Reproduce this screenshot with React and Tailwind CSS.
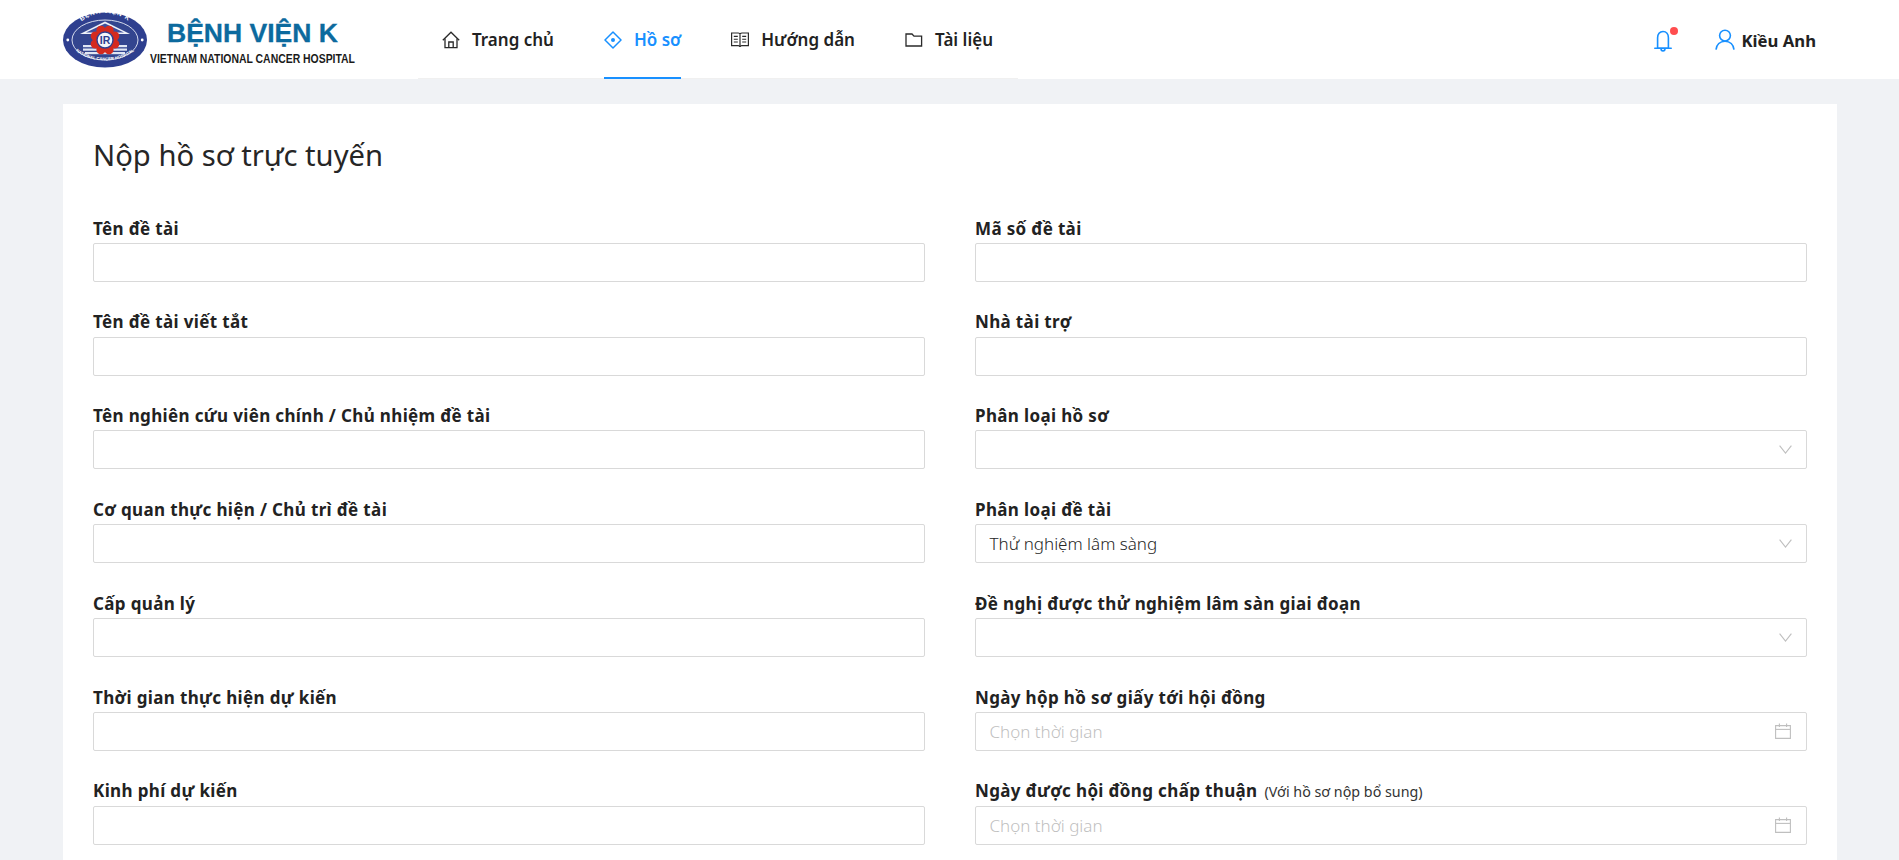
import React from "react";

function Logo() {
  const petals = [];
  for (let i = 0; i < 8; i++) {
    const a = (i * Math.PI) / 4 + Math.PI / 8;
    petals.push(<circle key={i} cx={42 + 10.5 * Math.cos(a)} cy={33 + 10.5 * Math.sin(a)} r="4.6" fill="#d42a1e" />);
  }
  return (
    <svg width="345" height="74" viewBox="0 0 345 74" className="shrink-0 block">
      <ellipse cx="42" cy="33" rx="42" ry="27.5" fill="#2e3f8f" />
      <ellipse cx="42" cy="33" rx="33" ry="20" fill="#33458f" stroke="#e8ecf6" strokeWidth="0.9" />
      <path d="M17 27 L42 14.5 L67 27 Z" fill="#eef1f8" />
      <path d="M23 25.5 L42 16.5 L61 25.5 Z" fill="#3d4f9c" />
      <rect x="20" y="38" width="44" height="2.2" fill="#dfe5f3" />
      <rect x="20" y="41.5" width="44" height="2.2" fill="#dfe5f3" />
      <rect x="22" y="45" width="40" height="2.2" fill="#dfe5f3" />
      {petals}
      <circle cx="42" cy="33" r="10" fill="#d42a1e" />
      <circle cx="42" cy="33" r="8" fill="#f4f6fb" stroke="#2e3f8f" strokeWidth="1.4" />
      <text x="42" y="37" textAnchor="middle" fontSize="10.5" fontWeight="700" fontFamily="'Liberation Sans', sans-serif" fill="#2e3f8f">IR</text>
      <path id="logoTop" d="M11 30 A 31 24 0 0 1 73 30" fill="none" />
      <text fontSize="6.5" fontWeight="700" fill="#fff" fontFamily="'Liberation Sans', sans-serif" letterSpacing="0.8">
        <textPath href="#logoTop" startOffset="50%" textAnchor="middle">BỆNH VIỆN K</textPath>
      </text>
      <path id="logoBot" d="M8 37 A 35 21.5 0 0 0 76 37" fill="none" />
      <text fontSize="4.2" fontWeight="700" fill="#fff" fontFamily="'Liberation Sans', sans-serif">
        <textPath href="#logoBot" startOffset="50%" textAnchor="middle">NATIONAL CANCER HOSPITAL</textPath>
      </text>
      <circle cx="4.8" cy="33" r="1.4" fill="#fff" />
      <circle cx="79.2" cy="33" r="1.4" fill="#fff" />
      <text x="104" y="35" fontSize="26" fontWeight="700" fontFamily="'Liberation Sans', sans-serif" fill="#0c6a9e" stroke="#0c6a9e" strokeWidth="0.3" textLength="171" lengthAdjust="spacingAndGlyphs">BỆNH VIỆN K</text>
      <text x="87" y="55.5" fontSize="12.5" fontWeight="700" fontFamily="'Liberation Sans', sans-serif" fill="#1a1a1a" textLength="205" lengthAdjust="spacingAndGlyphs">VIETNAM NATIONAL CANCER HOSPITAL</text>
    </svg>
  );
}

function HomeIcon() {
  return (
    <svg width="18" height="18" viewBox="0 0 18 18" fill="none" stroke="#2a2a2a" strokeWidth="1.3" className="shrink-0">
      <path d="M0.8 9.2 L9 1.2 L17.2 9.2" />
      <path d="M3 7.5 V16.6 H15 V7.5" />
      <path d="M6.8 16.6 V11 H11.2 V16.6" />
    </svg>
  );
}
function DiamondIcon() {
  return (
    <svg width="18" height="18" viewBox="0 0 18 18" fill="none" className="shrink-0">
      <path d="M9 1 L17 9 L9 17 L1 9 Z" stroke="#1890ff" strokeWidth="1.5" strokeLinejoin="round" />
      <circle cx="9" cy="9" r="2" fill="#1890ff" />
    </svg>
  );
}
function BookIcon() {
  return (
    <svg width="18" height="16" viewBox="0 0 18 16" fill="none" stroke="#2a2a2a" strokeWidth="1.2" className="shrink-0">
      <path d="M0.6 1 H7.2 C8.2 1 9 1.7 9 2.6 C9 1.7 9.8 1 10.8 1 H17.4 V13.6 H10.8 C9.9 13.6 9.2 14 9 15 C8.8 14 8.1 13.6 7.2 13.6 H0.6 Z" />
      <path d="M9 2.6 V14.6" />
      <path d="M2.8 4.4 H6.8 M2.8 7.2 H6.8 M2.8 10 H6.8 M11.2 4.4 H15.2 M11.2 7.2 H15.2 M11.2 10 H15.2" strokeWidth="1.1" />
    </svg>
  );
}
function FolderIcon() {
  return (
    <svg width="18" height="14" viewBox="0 0 18 14" fill="none" stroke="#2a2a2a" strokeWidth="1.3" className="shrink-0">
      <path d="M1 1 H7 L9 3.2 H16.6 V13 H1 Z" />
    </svg>
  );
}
function BellIcon() {
  return (
    <svg width="18" height="23" viewBox="0 0 18 23" fill="none" stroke="#1890ff" strokeWidth="1.6" className="block">
      <path d="M9 1.5 C5.6 1.5 3.6 4.2 3.6 7.8 V18.2 H14.4 V7.8 C14.4 4.2 12.4 1.5 9 1.5 Z" />
      <path d="M0.8 18.2 H17.2" strokeLinecap="round" />
      <path d="M7 18.5 A 2 2.4 0 0 0 11 18.5" />
    </svg>
  );
}
function UserIcon() {
  return (
    <svg width="20" height="21" viewBox="0 0 20 21" fill="none" stroke="#1890ff" strokeWidth="1.6" className="shrink-0">
      <circle cx="10" cy="6.6" r="5.4" />
      <path d="M1 20.6 C1.4 15.6 5 12.2 10 12.2 C15 12.2 18.6 15.6 19 20.6" />
    </svg>
  );
}
function Chevron() {
  return (
    <svg width="13" height="9" viewBox="0 0 13 9" fill="none" stroke="#bfbfbf" strokeWidth="1.1" className="shrink-0 -mr-[1px]">
      <path d="M0.6 0.6 L6.5 8 L12.4 0.6" />
    </svg>
  );
}
function Calendar() {
  return (
    <svg width="16" height="16" viewBox="0 0 16 16" fill="none" stroke="#bfbfbf" strokeWidth="1.1" className="shrink-0">
      <path d="M0.6 2.6 H15.4 V15.4 H0.6 Z" />
      <path d="M0.6 6.4 H15.4" />
      <path d="M4.4 0.5 V4 M11.6 0.5 V4" />
    </svg>
  );
}

function Box({ children, right }) {
  return (
    <div className="h-[39.14px] border border-[#d9d9d9] rounded-[2px] bg-white pl-[13.5px] pr-[15px] flex items-center justify-between text-[17px] leading-[25px] font-light">
      <span>{children}</span>
      {right}
    </div>
  );
}

function Field({ label, note, children, right }) {
  return (
    <div className="mb-[24px]">
      <div className="h-[30.69px] pt-[2.5px] flex items-center whitespace-nowrap">
        <span className="text-[17px] font-bold tracking-[0.35px] leading-[22px] text-[#222]">{label}</span>
        {note && <span className="text-[14.3px] leading-[22px] ml-[7px] mt-[1px] text-[#333]">{note}</span>}
      </div>
      <Box right={right}>{children}</Box>
    </div>
  );
}

const Placeholder = () => <span className="text-[#bfbfbf]">Chọn thời gian</span>;

const nav = [
  { label: "Trang chủ", icon: <HomeIcon /> },
  { label: "Hồ sơ", icon: <DiamondIcon />, active: true },
  { label: "Hướng dẫn", icon: <BookIcon /> },
  { label: "Tài liệu", icon: <FolderIcon /> },
];

export default function App() {
  return (
    <div className="h-[860px] overflow-hidden bg-[#f0f2f5] text-[#262626] font-['Noto_Sans','Open_Sans',sans-serif]">
      <header className="h-[79px] bg-white flex items-start">
        <div className="pl-[63px] pt-[6.5px] w-[418px] shrink-0">
          <Logo />
        </div>
        <nav className="h-[79px] border-b border-[#f0f0f0] flex gap-[50px] pl-[24px] w-[600px]">
          {nav.map((n) => (
            <div
              key={n.label}
              className={`h-[79px] flex items-center gap-[12px] pt-[1px] text-[17px] font-semibold ${
                n.active ? "text-[#1890ff] shadow-[inset_0_-2px_0_#1890ff]" : "text-[#222]"
              }`}
            >
              {n.icon}
              <span>{n.label}</span>
            </div>
          ))}
        </nav>
        <div className="ml-auto h-[79px] flex items-center pr-[83px]">
          <div className="relative mr-[43px] mt-[4px]">
            <BellIcon />
            <span className="absolute -top-[3px] -right-[6px] w-[8px] h-[8px] rounded-full bg-[#ff4d4f]" />
          </div>
          <div className="flex items-center gap-[7px] text-[16.7px] font-bold text-[#222]">
            <UserIcon />
            <span className="mt-[3px]">Kiều Anh</span>
          </div>
        </div>
      </header>

      <main className="pl-[63px] pr-[62px] pt-[25px]">
        <div className="bg-white px-[30px] pt-[28px] pb-[30px]">
          <h1 className="text-[29.2px] leading-[47px] font-normal text-[#262626] mb-[33px]">Nộp hồ sơ trực tuyến</h1>
          <div className="grid grid-cols-2 gap-x-[50px]">
            <div>
              <Field label="Tên đề tài" />
              <Field label="Tên đề tài viết tắt" />
              <Field label="Tên nghiên cứu viên chính / Chủ nhiệm đề tài" />
              <Field label="Cơ quan thực hiện / Chủ trì đề tài" />
              <Field label="Cấp quản lý" />
              <Field label="Thời gian thực hiện dự kiến" />
              <Field label="Kinh phí dự kiến" />
            </div>
            <div>
              <Field label="Mã số đề tài" />
              <Field label="Nhà tài trợ" />
              <Field label="Phân loại hồ sơ" right={<Chevron />} />
              <Field label="Phân loại đề tài" right={<Chevron />}>Thử nghiệm lâm sàng</Field>
              <Field label="Đề nghị được thử nghiệm lâm sàn giai đoạn" right={<Chevron />} />
              <Field label="Ngày hộp hồ sơ giấy tới hội đồng" right={<Calendar />}><Placeholder /></Field>
              <Field label="Ngày được hội đồng chấp thuận" note="(Với hồ sơ nộp bổ sung)" right={<Calendar />}><Placeholder /></Field>
            </div>
          </div>
        </div>
      </main>
    </div>
  );
}
